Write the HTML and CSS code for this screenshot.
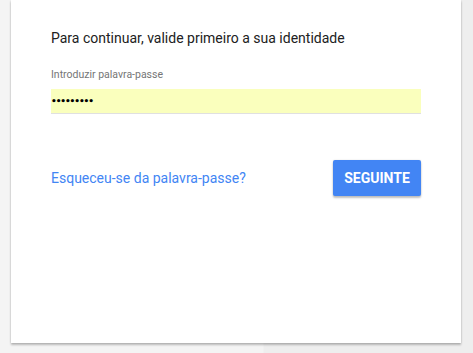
FILE: index.html
```html
<!DOCTYPE html>
<html lang="pt">
<head>
<meta charset="utf-8">
<link rel="stylesheet" href="styles.css">
</head>
<body>
<main class="card">
  <h1 class="title">Para continuar, valide primeiro a sua identidade</h1>
  <div class="field">
    <label class="label" for="pw">Introduzir palavra-passe</label>
    <div class="input">•••••••••</div>
  </div>
  <div class="actions">
    <a class="link" href="#">Esqueceu-se da palavra-passe?</a>
    <button class="btn" type="button">SEGUINTE</button>
  </div>
</main>
</body>
</html>
```
FILE: styles.css
```css
html, body {
  margin: 0;
  height: 100%;
}
body {
  background: linear-gradient(90deg, #f4f4f4 0, #f4f4f4 263px, #eeeeee 264px, #eeeeee 100%);
  font-family: Roboto, "Noto Sans", sans-serif;
  overflow: hidden;
}
.card {
  box-sizing: border-box;
  margin-left: 11px;
  width: 450px;
  height: 343px;
  background: #fff;
  padding: 26px 40px 0 40px;
  box-shadow: 0 2px 2px rgba(0,0,0,0.24), 0 0 2px rgba(0,0,0,0.12);
}
.title {
  margin: 0;
  font-size: 14px;
  line-height: 24px;
  font-weight: 400;
  color: #212121;
}
.field {
  margin-top: 17px;
  display: flex;
  flex-direction: column;
}
.label {
  font-size: 10.5px;
  line-height: 16px;
  color: #757575;
}
.input {
  margin-top: 6px;
  height: 24px;
  line-height: 24px;
  background: #faffbd;
  border-bottom: 1px solid #e0e0e0;
  font-size: 9px;
  letter-spacing: -1.1px;
  color: #000;
  font-family: "DejaVu Sans", sans-serif;
  font-weight: bold;
}
.actions {
  margin-top: 46px;
  display: flex;
  align-items: center;
  justify-content: space-between;
}
.link {
  color: #4285f4;
  font-size: 14px;
  text-decoration: none;
}
.btn {
  height: 36px;
  width: 88px;
  border: none;
  border-radius: 2px;
  background: #4285f4;
  color: #fff;
  font-family: Roboto, sans-serif;
  font-weight: 700;
  font-size: 14px;
  padding: 0;
  box-shadow: 0 2px 2px rgba(0,0,0,0.24), 0 0 2px rgba(0,0,0,0.12);
}
```
